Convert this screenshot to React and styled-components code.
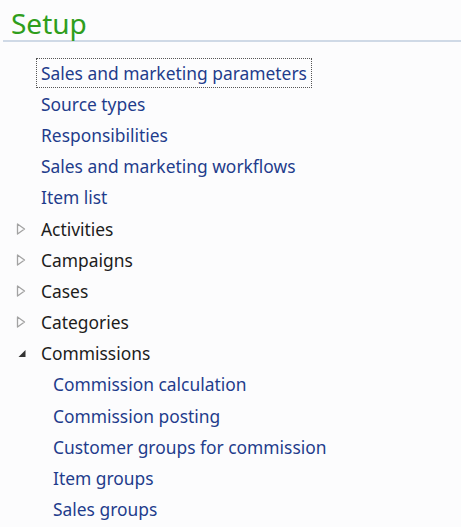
import styled, { createGlobalStyle } from "styled-components";

const GlobalStyle = createGlobalStyle`
  html, body {
    margin: 0;
    padding: 0;
    background: #fcfcfd;
  }
  body {
    font-family: "Noto Sans", "Open Sans", sans-serif;
  }
`;

const Page = styled.div`
  width: 461px;
  height: 527px;
  overflow: hidden;
  background: #fcfcfd;
`;

const Header = styled.div`
  margin-left: 3px;
  height: 40px;
  border-bottom: 2px solid #cfd9e6;
  display: flex;
  align-items: flex-end;
`;

const Title = styled.h1`
  margin: 0 0 3px 8px;
  font-size: 28px;
  font-weight: 400;
  line-height: 1;
  color: #2f9e1c;
`;

const List = styled.ul`
  list-style: none;
  margin: 15px 0 0 0;
  padding: 0;
`;

const Row = styled.li`
  height: 31.2px;
  display: flex;
  align-items: center;
  padding-left: ${(p) => (p.$depth === 1 ? 53 : 16)}px;
`;

const Toggle = styled.span`
  width: 25px;
  flex: none;
  display: flex;
  align-items: center;
`;

const Label = styled.span`
  font-size: 17.4px;
  line-height: 28px;
  padding: 0 4px;
  margin-left: -4px;
  color: ${(p) => (p.$group ? "#1c1c1c" : "#1f3c8c")};
  outline: ${(p) => (p.$focused ? "1px dotted #555" : "none")};
  outline-offset: 0;
`;

function Collapsed() {
  return (
    <svg width="10" height="12" viewBox="0 0 10 12">
      <path d="M1.5 1 L8.5 6 L1.5 11 Z" fill="none" stroke="#a3a3a3" strokeWidth="1.3" strokeLinejoin="round" />
    </svg>
  );
}

function Expanded() {
  return (
    <svg width="10" height="9" viewBox="0 0 10 9">
      <path d="M9.5 1 L9.5 8 L2.5 8 Z" fill="#333" />
    </svg>
  );
}

const items = [
  { label: "Sales and marketing parameters", depth: 0, focused: true },
  { label: "Source types", depth: 0 },
  { label: "Responsibilities", depth: 0 },
  { label: "Sales and marketing workflows", depth: 0 },
  { label: "Item list", depth: 0 },
  { label: "Activities", depth: 0, group: "closed" },
  { label: "Campaigns", depth: 0, group: "closed" },
  { label: "Cases", depth: 0, group: "closed" },
  { label: "Categories", depth: 0, group: "closed" },
  { label: "Commissions", depth: 0, group: "open" },
  { label: "Commission calculation", depth: 1 },
  { label: "Commission posting", depth: 1 },
  { label: "Customer groups for commission", depth: 1 },
  { label: "Item groups", depth: 1 },
  { label: "Sales groups", depth: 1 },
];

export default function App() {
  return (
    <Page>
      <GlobalStyle />
      <Header>
        <Title>Setup</Title>
      </Header>
      <List>
        {items.map((it) => (
          <Row key={it.label} $depth={it.depth}>
            {it.depth === 0 && (
              <Toggle>
                {it.group === "closed" && <Collapsed />}
                {it.group === "open" && <Expanded />}
              </Toggle>
            )}
            <Label $group={!!it.group} $focused={it.focused}>
              {it.label}
            </Label>
          </Row>
        ))}
      </List>
    </Page>
  );
}
